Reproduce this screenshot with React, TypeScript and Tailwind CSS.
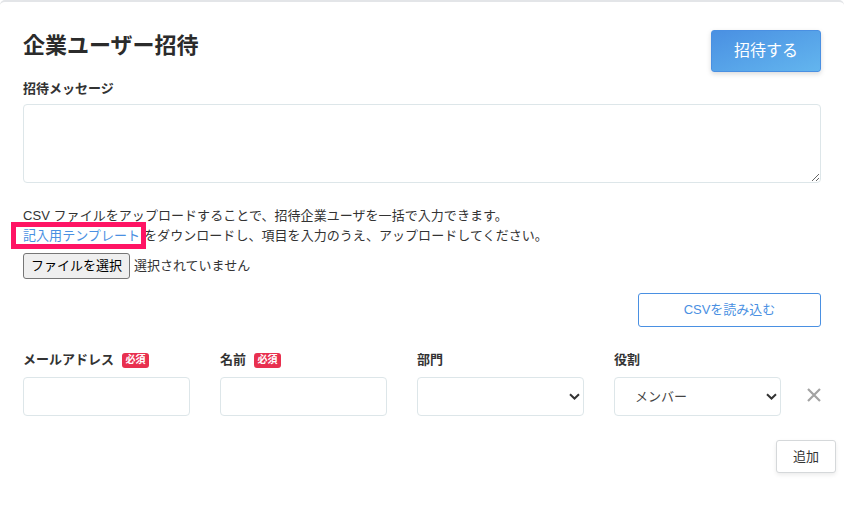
import React from "react";

const font = { fontFamily: '"Liberation Sans","Noto Sans CJK JP",sans-serif' };

function Label({ text, required }: { text: string; required?: boolean }) {
  return (
    <div className="flex h-[18px] items-center gap-[8px] text-[13px] leading-[18px] font-bold text-[#333]">
      <span>{text}</span>
      {required && (
        <span className="flex h-[15px] w-[27px] items-center justify-center rounded-[3px] bg-[#e8304f] text-[10px] font-bold text-white">
          必須
        </span>
      )}
    </div>
  );
}

function Select({ value }: { value?: string }) {
  return (
    <div className="flex h-[39px] w-[167px] items-center justify-between rounded-[4px] border border-[#dde6e9] bg-white pr-[3px] pl-[20px] text-[13px] text-[#444]">
      <span>{value}</span>
      <svg width="11" height="7" viewBox="0 0 11 7" fill="none">
        <path d="M1 1.2l4.5 4.3L10 1.2" stroke="#333" strokeWidth="2" />
      </svg>
    </div>
  );
}

export default function App() {
  return (
    <div style={font} className="h-[517px] w-[844px] overflow-hidden bg-white text-[#333]">
      <div className="h-full rounded-t-[5px] border-t-2 border-[#e3e5e8] px-[23px] pt-[28px]">
        <div className="flex items-start justify-between">
          <h1 className="mt-[1px] text-[22px] leading-[30px] font-bold text-[#2b2b2b]">企業ユーザー招待</h1>
          <button className="h-[42px] w-[110px] rounded-[3px] border border-[#4a90e2] bg-gradient-to-br from-[#4a90e2] to-[#63b5ee] text-[16px] text-white shadow-[0_2px_5px_rgba(0,0,0,0.15)]">
            招待する
          </button>
        </div>
        <div className="mt-[8px]">
          <Label text="招待メッセージ" />
        </div>
        <textarea className="mt-[6px] block h-[79px] w-full rounded-[4px] border border-[#dde6e9] bg-white" />
        <div className="mt-[23px] text-[13px] leading-[20px] tracking-[0.05px] text-[#333]">
          <p>CSV ファイルをアップロードすることで、招待企業ユーザを一括で入力できます。</p>
          <p>
            <span className="relative text-[#4a90e2]">
              記入用テンプレート
              <span className="absolute top-[-6px] right-[-6px] bottom-[-6px] left-[-12px] border-[5px] border-[#ff1464]" />
            </span>
            <span className="ml-[4px]">をダウンロードし、項目を入力のうえ、アップロードしてください。</span>
          </p>
        </div>
        <div className="mt-[7px] flex h-[26px] items-center gap-[4px] text-[13px]">
          <button className="h-[26px] w-[107px] rounded-[3px] border border-[#767676] bg-[#efefef] text-[13px] text-black">
            ファイルを選択
          </button>
          <span>選択されていません</span>
        </div>
        <div className="mt-[14px] flex justify-end">
          <button className="h-[34px] w-[183px] rounded-[3px] border border-[#4a90e2] bg-white text-[13px] text-[#4a90e2]">
            CSVを読み込む
          </button>
        </div>
        <div className="mt-[24px] flex items-start gap-[30px]">
          <div className="flex w-[167px] flex-col gap-[8px]">
            <Label text="メールアドレス" required />
            <div className="h-[39px] rounded-[4px] border border-[#dde6e9] bg-white" />
          </div>
          <div className="flex w-[167px] flex-col gap-[8px]">
            <Label text="名前" required />
            <div className="h-[39px] rounded-[4px] border border-[#dde6e9] bg-white" />
          </div>
          <div className="flex w-[167px] flex-col gap-[8px]">
            <Label text="部門" />
            <Select />
          </div>
          <div className="flex w-[167px] flex-col gap-[8px]">
            <Label text="役割" />
            <Select value="メンバー" />
          </div>
          <svg className="mt-[37px] -ml-[4px] shrink-0" width="14" height="14" viewBox="0 0 14 14" fill="none">
            <path d="M1 1l12 12M13 1L1 13" stroke="#a3a3a3" strokeWidth="2.2" />
          </svg>
        </div>
        <div className="-mr-[15px] mt-[24px] flex justify-end">
          <button className="h-[33px] w-[60px] rounded-[3px] border border-[#d5d8da] bg-white text-[13px] text-[#333] shadow-[0_2px_4px_rgba(0,0,0,0.08)]">
            追加
          </button>
        </div>
      </div>
    </div>
  );
}
